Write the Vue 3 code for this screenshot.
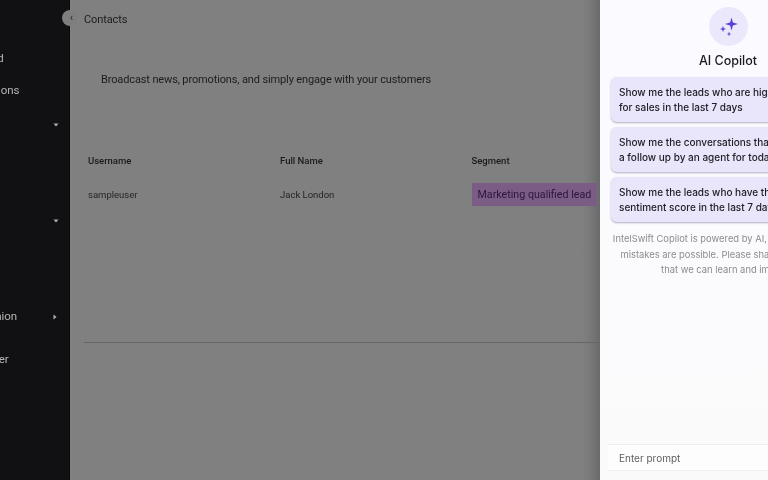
<script setup>
const navRows = [
  { text: 'Dashboard', cls: 'r1', shift: -52 },
  { text: 'Conversations', cls: 'r2', shift: -54 },
  { text: '', cls: 'r3', chevron: 'down' },
  { text: '', cls: 'r4', chevron: 'down' },
  { text: 'Opinion', cls: 'r5', shift: -22, chevron: 'right' },
  { text: 'Partner', cls: 'r6', shift: -29 },
]
const prompts = [
  ['Show me the leads who are highly qualified', 'for sales in the last 7 days'],
  ['Show me the conversations that need', 'a follow up by an agent for today'],
  ['Show me the leads who have the best', 'sentiment score in the last 7 days'],
]
</script>

<template>
  <div class="page">
    <aside class="sidebar">
      <div v-for="row in navRows" :key="row.cls" class="nav-row" :class="row.cls">
        <span v-if="row.text" class="nav-label" :style="{ marginLeft: row.shift + 'px' }">{{ row.text }}</span>
        <svg v-if="row.chevron === 'down'" class="chev" width="6" height="4" viewBox="0 0 6 4"><path d="M0.5 0.5h5L3 3.5z" fill="#b0b0b0"/></svg>
        <svg v-if="row.chevron === 'right'" class="chev" width="4" height="6" viewBox="0 0 4 6"><path d="M0.5 0.5v5L3.5 3z" fill="#b0b0b0"/></svg>
      </div>
    </aside>

    <main class="main">
      <div class="collapse"><span>‹</span></div>
      <div class="crumb">Contacts</div>
      <p class="lead">Broadcast news, promotions, and simply engage with your customers</p>
      <div class="table">
        <div class="thead">
          <span>Username</span><span>Full Name</span><span>Segment</span>
        </div>
        <div class="trow">
          <span>sampleuser</span><span>Jack London</span>
          <span class="cell-tag"><span class="tag">Marketing qualified lead</span></span>
        </div>
      </div>
      <div class="rule"></div>
    </main>

    <section class="panel">
      <div class="spark">
        <svg width="24" height="24" viewBox="0 0 24 24" fill="#5b3fd6">
          <path d="M15.5 2.5 16.900 7.600 22 9 16.900 10.400 15.500 15.500 14.100 10.400 9 9 14.100 7.600z"/>
          <path d="M7 10.800 7.800 13.200 10.200 14 7.800 14.800 7 17.200 6.200 14.800 3.800 14 6.200 13.200z"/>
          <path d="M13 16.500 13.600 18.400 15.500 19 13.600 19.600 13 21.500 12.400 19.600 10.500 19 12.400 18.400z"/>
        </svg>
      </div>
      <h1 class="title">AI Copilot</h1>
      <div class="cards">
        <div v-for="p in prompts" :key="p[0]" class="card">
          <div>{{ p[0] }}</div>
          <div>{{ p[1] }}</div>
        </div>
      </div>
      <p class="note">
        IntelSwift Copilot is powered by AI, so surprises and<br>
        mistakes are possible. Please share feedback so<br>
        that we can learn and improve
      </p>
      <div class="prompt">Enter prompt</div>
    </section>
  </div>
</template>

<style>
html, body { margin: 0; background: #808080; }
</style>

<style scoped>
.page {
  display: grid;
  grid-template-columns: 70px 530px 256px;
  width: 768px;
  height: 480px;
  overflow: hidden;
  font-family: Roboto, "Liberation Sans", sans-serif;
  filter: blur(0.35px);
}
.sidebar {
  box-sizing: border-box;
  background: #111113;
  border-right: 1px solid #0a0a0b;
  height: 480px;
  overflow: hidden;
  padding-top: 50px;
}
.nav-row {
  display: flex;
  align-items: center;
  height: 16px;
  color: #b5b5b5;
  font-size: 11.5px;
  white-space: nowrap;
  position: relative;
}
.r2 { margin-top: 16px; }
.r3 { margin-top: 19px; }
.r4 { margin-top: 80px; }
.r5 { margin-top: 79px; }
.r6 { margin-top: 27px; }
.chev { position: absolute; left: 53px; top: 6px; }
.nav-label { flex: none; }

.main {
  position: relative;
  background: linear-gradient(to right, #808080 0 96.5%, #7a7a7a 98%, #6a6a6a 100%);
  color: #1c1c1e;
  font-size: 11px;
}
.collapse {
  position: absolute;
  left: -8px;
  top: 10px;
  width: 16px;
  height: 16px;
  border-radius: 50%;
  background: #7e7e7e;
  color: #222;
  font-size: 10px;
  line-height: 15px;
  text-align: center;
}
.collapse span { display: block; margin-left: 3px; }
.crumb {
  margin: 12px 0 0 14px;
  line-height: 15px;
  letter-spacing: -0.1px;
}
.lead {
  margin: 45px 0 0 31px;
  line-height: 16px;
  letter-spacing: -0.13px;
}
.table { margin: 65px 0 0 18px; font-size: 9.5px; }
.thead, .trow {
  display: grid;
  grid-template-columns: 192px 191.5px 1fr;
  align-items: center;
}
.thead { height: 15px; font-weight: 500; color: #1a1a1c; }
.trow { margin-top: 14px; height: 24px; color: #242426; }
.tag {
  display: inline-block;
  height: 23px;
  padding: 0 6px;
  line-height: 24px;
  font-size: 10.7px;
  color: #2f1540;
  background: #7a5c85;
  white-space: nowrap;
  border-radius: 1px;
}
.rule { margin: 136px 0 0 14px; height: 1px; background: #666; }

.panel {
  box-sizing: border-box;
  height: 480px;
  position: relative;
  padding: 7px 11px 0;
  font-family: Inter, "Liberation Sans", sans-serif;
  display: flex;
  flex-direction: column;
  align-items: center;
  background: linear-gradient(to bottom, #fbfaff 0, #fbfbfd 70%, #fafafa 100%);
}
.spark {
  width: 39px;
  height: 39px;
  border-radius: 50%;
  background: #ece8fb;
  display: flex;
  align-items: center;
  justify-content: center;
}
.title {
  margin: 7px 0 0;
  font-size: 12.5px;
  line-height: 16px;
  font-weight: 500;
  color: #1a1a1e;
}
.cards { margin-top: 8px; width: 100%; display: flex; flex-direction: column; gap: 5px; }
.card {
  box-sizing: border-box;
  height: 45px;
  padding: 8px 8px;
  border-radius: 6px;
  background: #e9e5fb;
  box-shadow: 0 1px 2px rgba(40, 30, 80, 0.35);
  font-size: 10px;
  line-height: 15px;
  font-weight: 500;
  color: #222027;
  white-space: nowrap;
  overflow: hidden;
}
.note {
  margin: 9px 0 0;
  width: 100%;
  text-align: center;
  font-size: 9.4px;
  line-height: 15.5px;
  color: #8b8b90;
  white-space: nowrap;
}
.prompt {
  position: absolute;
  left: 8px;
  right: 0;
  top: 444px;
  height: 27px;
  box-sizing: border-box;
  border-top: 1px solid #efefef;
  border-bottom: 1px solid #efefef;
  background: #fdfdfd;
  padding-left: 11px;
  font-size: 10px;
  line-height: 27px;
  color: #5e5e60;
}
</style>
